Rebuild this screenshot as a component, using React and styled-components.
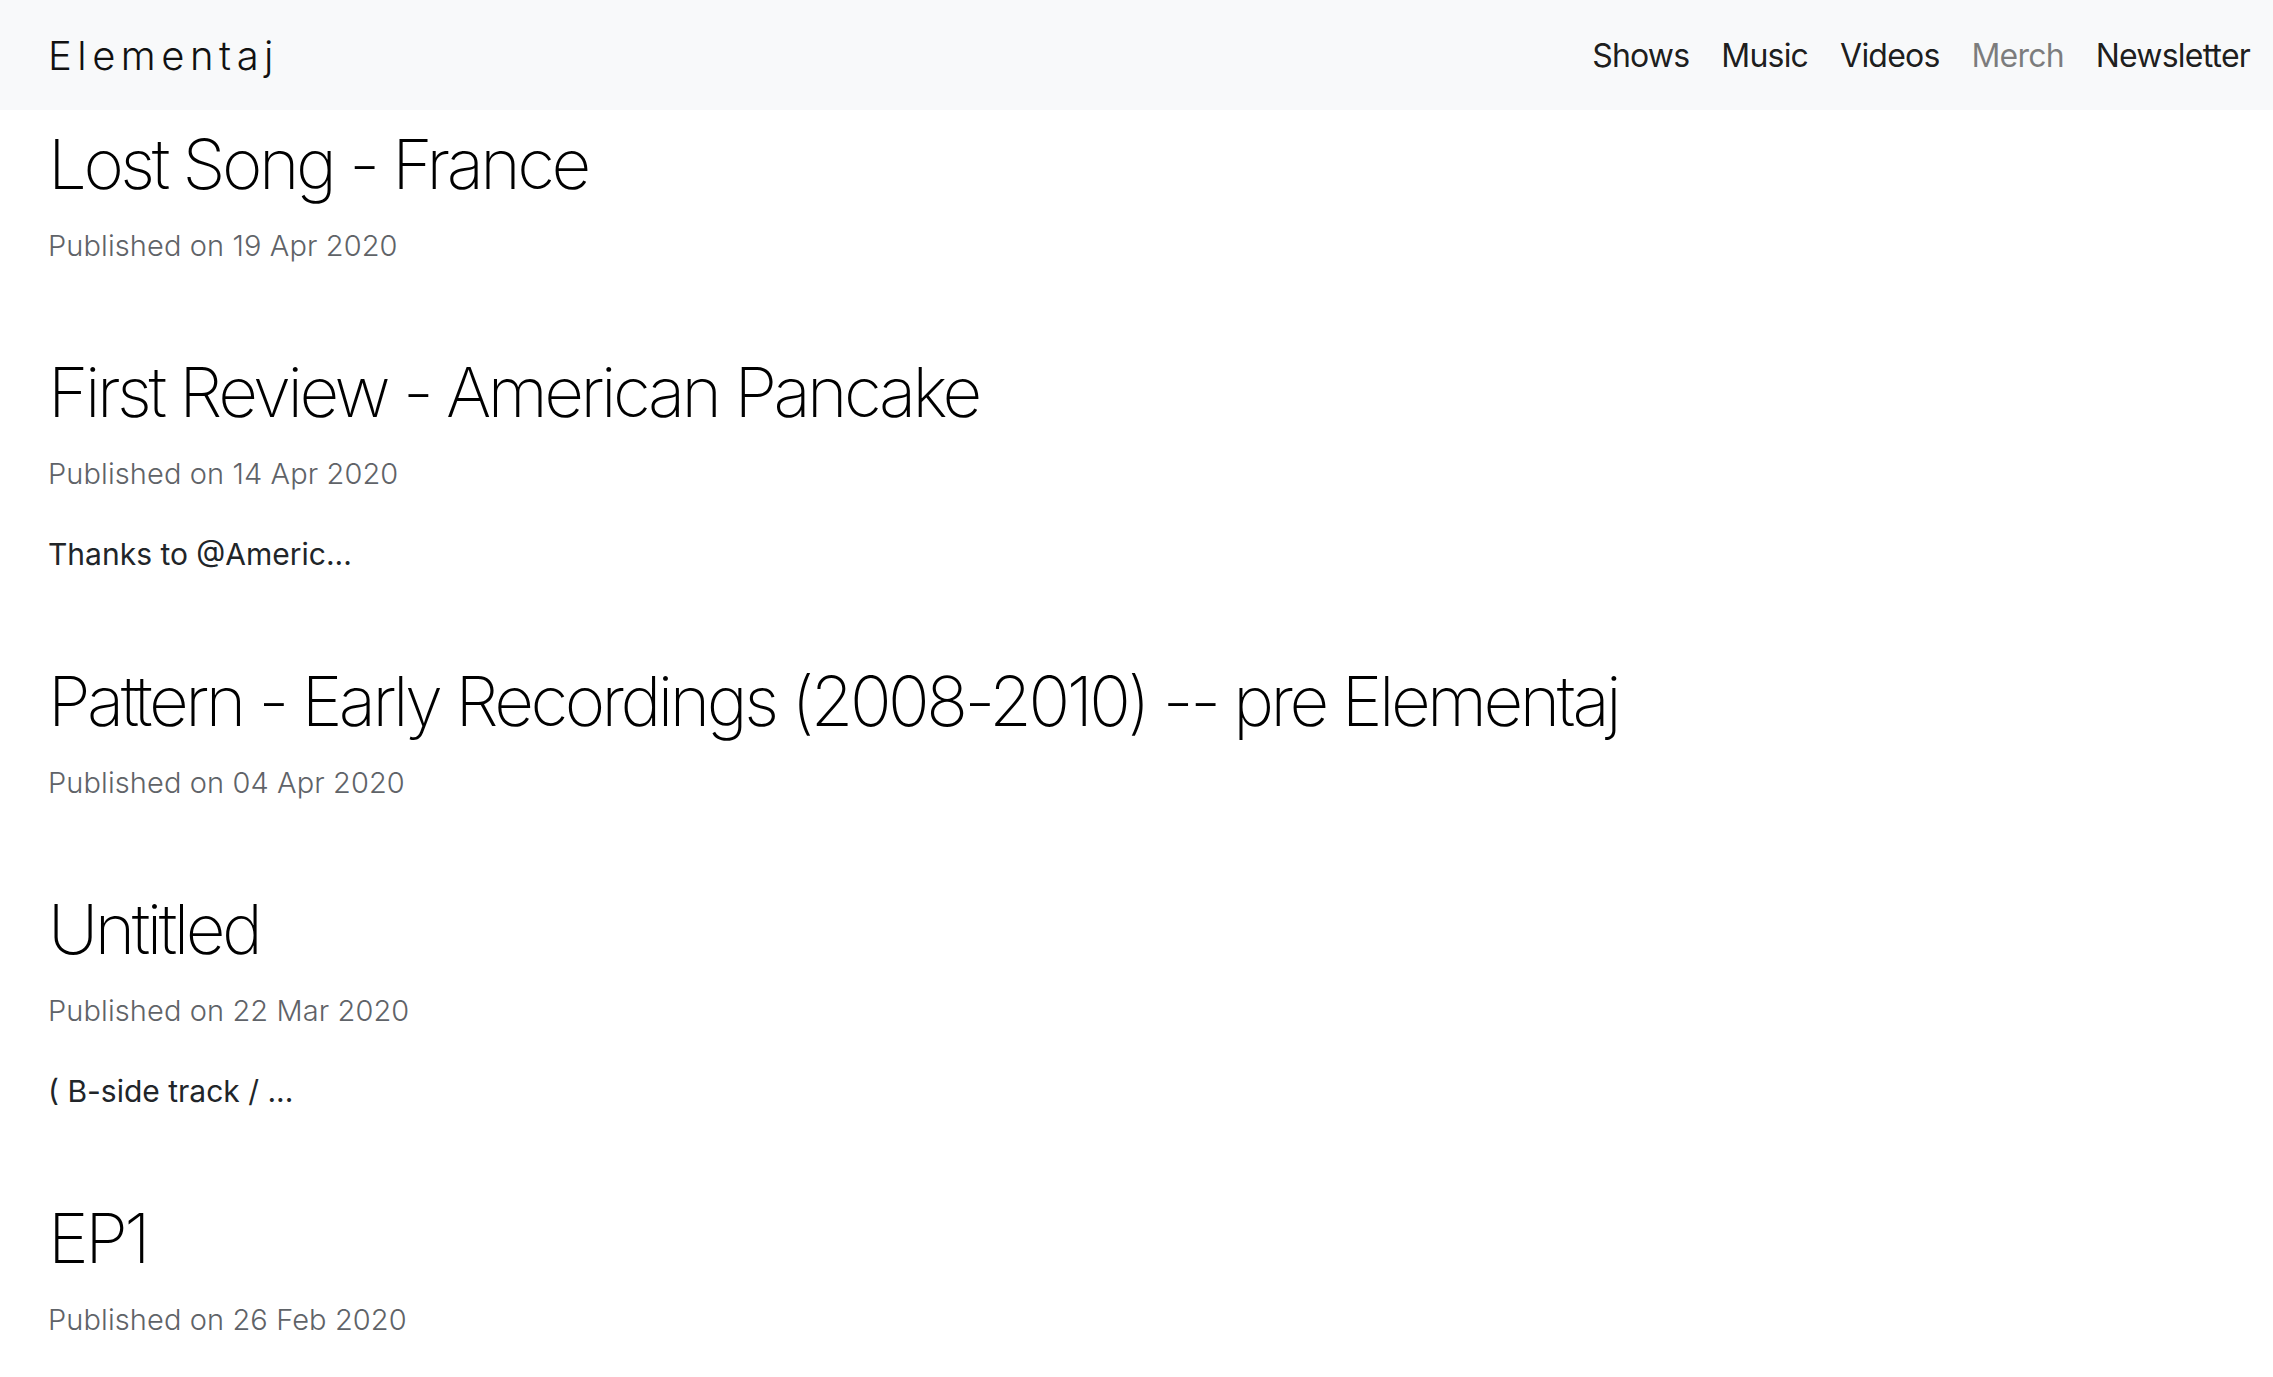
import React from 'react';
import styled, { createGlobalStyle } from 'styled-components';

const GlobalStyle = createGlobalStyle`
  html, body {
    margin: 0;
    padding: 0;
    background: #fff;
  }
  body {
    font-family: Inter, "Liberation Sans", sans-serif;
    color: #212529;
  }
`;

const Navbar = styled.nav`
  height: 110px;
  box-sizing: border-box;
  display: flex;
  align-items: center;
  justify-content: space-between;
  padding: 0 7px 0 48px;
  background-color: #f8f9fa;
`;

const Brand = styled.a`
  font-size: 40px;
  font-weight: 300;
  letter-spacing: 5.5px;
  color: #111;
  text-decoration: none;
`;

const NavList = styled.ul`
  display: flex;
  list-style: none;
  margin: 0;
  padding: 0;
`;

const NavLink = styled.a`
  display: block;
  padding: 0 16px;
  font-size: 32px;
  font-weight: 400;
  letter-spacing: -0.8px;
  color: ${(p) => (p.$muted ? 'rgba(0, 0, 0, 0.5)' : 'rgba(0, 0, 0, 0.9)')};
  text-decoration: none;
`;

const Main = styled.main`
  display: flex;
  flex-direction: column;
  gap: 82px;
  padding: 12px 48px 60px;
`;

const Post = styled.article`
  display: flex;
  flex-direction: column;
`;

const Title = styled.h2`
  margin: 0;
  font-size: 69px;
  line-height: 84px;
  font-weight: 200;
  letter-spacing: -3.5px;
  color: #000;
`;

const Meta = styled.p`
  margin: 18px 0 0;
  font-size: 29px;
  line-height: 44px;
  font-weight: 300;
  letter-spacing: 0.1px;
  color: #5f6368;
`;

const Excerpt = styled.p`
  margin: 35px 0 0;
  font-size: 30px;
  line-height: 46px;
  font-weight: 400;
  color: #212529;
`;

const links = [
  { label: 'Shows' },
  { label: 'Music' },
  { label: 'Videos' },
  { label: 'Merch', muted: true },
  { label: 'Newsletter' },
];

const posts = [
  { title: 'Lost Song - France', date: '19 Apr 2020' },
  { title: 'First Review - American Pancake', date: '14 Apr 2020', excerpt: 'Thanks to @Americ...' },
  { title: 'Pattern - Early Recordings (2008-2010) -- pre Elementaj', date: '04 Apr 2020' },
  { title: 'Untitled', date: '22 Mar 2020', excerpt: '( B-side track / ...' },
  { title: 'EP1', date: '26 Feb 2020' },
];

export default function App() {
  return (
    <>
      <GlobalStyle />
      <Navbar>
        <Brand href="#">Elementaj</Brand>
        <NavList>
          {links.map((l) => (
            <li key={l.label}>
              <NavLink href="#" $muted={l.muted}>{l.label}</NavLink>
            </li>
          ))}
        </NavList>
      </Navbar>
      <Main>
        {posts.map((p) => (
          <Post key={p.title}>
            <Title>{p.title}</Title>
            <Meta>Published on {p.date}</Meta>
            {p.excerpt && <Excerpt>{p.excerpt}</Excerpt>}
          </Post>
        ))}
      </Main>
    </>
  );
}
